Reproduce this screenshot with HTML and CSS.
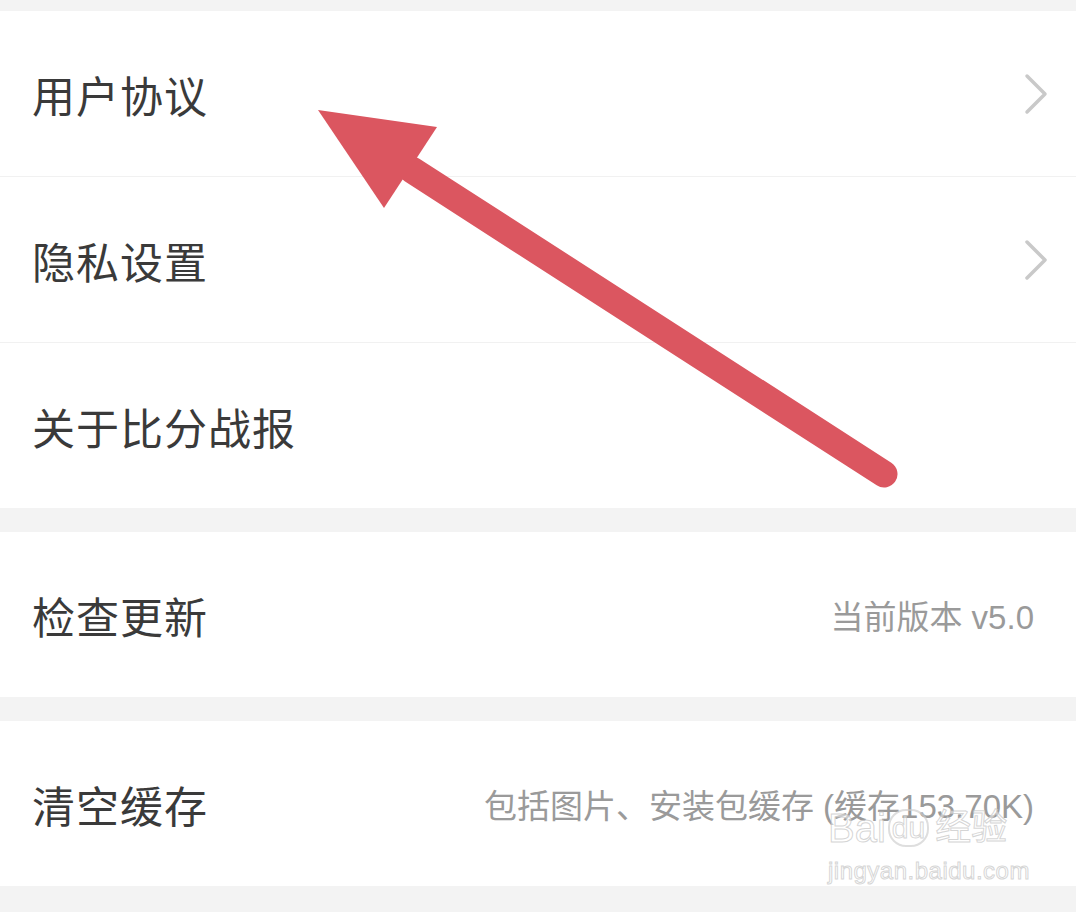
FILE: index.html
```html
<!DOCTYPE html>
<html lang="zh-CN">
<head>
<meta charset="utf-8">
<title>设置</title>
<link rel="stylesheet" href="styles.css">
</head>
<body>
<div class="page">
  <div class="group">
    <div class="row">
      <span class="title">用户协议</span>
      <svg class="chev" width="24" height="42" viewBox="0 0 24 42"><polyline points="3,3 21,21 3,39" fill="none" stroke="#c9c9c9" stroke-width="3.5" stroke-linecap="round" stroke-linejoin="round"/></svg>
    </div>
    <div class="row">
      <span class="title">隐私设置</span>
      <svg class="chev" width="24" height="42" viewBox="0 0 24 42"><polyline points="3,3 21,21 3,39" fill="none" stroke="#c9c9c9" stroke-width="3.5" stroke-linecap="round" stroke-linejoin="round"/></svg>
    </div>
    <div class="row">
      <span class="title">关于比分战报</span>
    </div>
  </div>
  <div class="group">
    <div class="row">
      <span class="title">检查更新</span>
      <span class="value">当前版本 v5.0</span>
    </div>
  </div>
  <div class="group">
    <div class="row">
      <span class="title">清空缓存</span>
      <span class="value">包括图片、安装包缓存 (缓存153.70K)</span>
    </div>
  </div>

  <svg class="arrow" width="1076" height="912" viewBox="0 0 1076 912">
    <line x1="412" y1="170" x2="884" y2="474" stroke="#db5660" stroke-width="27" stroke-linecap="round"/>
    <polygon points="318,110 437,127 384,208" fill="#db5660"/>
  </svg>

  <div class="watermark">
    <div class="wm-top"><span class="wm-bai">Bai</span><span class="wm-du">du</span><span class="wm-jy">经验</span></div>
    <div class="wm-url">jingyan.baidu.com</div>
  </div>
</div>
</body>
</html>
```
FILE: styles.css
```css
html, body {
  margin: 0;
  padding: 0;
}
body {
  background: #f3f3f3;
  font-family: "Liberation Sans", "Noto Sans CJK SC", sans-serif;
  width: 1076px;
  height: 912px;
  overflow: hidden;
}
.page {
  position: relative;
  padding-top: 11px;
  display: flex;
  flex-direction: column;
  gap: 24px;
  height: 912px;
  box-sizing: border-box;
}
.group {
  background: #ffffff;
  display: flex;
  flex-direction: column;
}
.row {
  height: 165px;
  display: flex;
  align-items: center;
  justify-content: space-between;
  padding: 0 28px 0 32px;
  border-bottom: 1px solid #f1f1f1;
}
.row:last-child {
  border-bottom: none;
}
.group:last-of-type .row {
  height: 166px;
}
.title {
  font-family: "Noto Sans CJK SC", sans-serif;
  font-size: 43px;
  color: #3a3a3a;
  letter-spacing: 1px;
}
.value {
  font-family: "Liberation Sans", "Noto Sans CJK SC", sans-serif;
  font-size: 33px;
  color: #9a9a9a;
  margin-right: 14px;
}
.chev {
  display: block;
}
.arrow {
  position: absolute;
  left: 0;
  top: 0;
  pointer-events: none;
}
.watermark {
  position: absolute;
  left: 828px;
  top: 800px;
  width: 192px;
  color: rgba(255, 255, 255, 0.5);
  font-family: "Liberation Sans", "Noto Sans CJK SC", sans-serif;
  -webkit-text-stroke: 1px rgba(195, 195, 195, 0.7);
}
.wm-top {
  display: flex;
  align-items: center;
  font-size: 40px;
  line-height: 56px;
}
.wm-du {
  font-size: 30px;
  margin: 0 6px 0 2px;
  padding: 0 2px;
  border: 2px solid rgba(205, 205, 205, 0.65);
  border-radius: 18px;
  line-height: 34px;
}
.wm-jy {
  font-size: 36px;
}
.wm-url {
  font-size: 24px;
  line-height: 30px;
  letter-spacing: 0.5px;
}
```
